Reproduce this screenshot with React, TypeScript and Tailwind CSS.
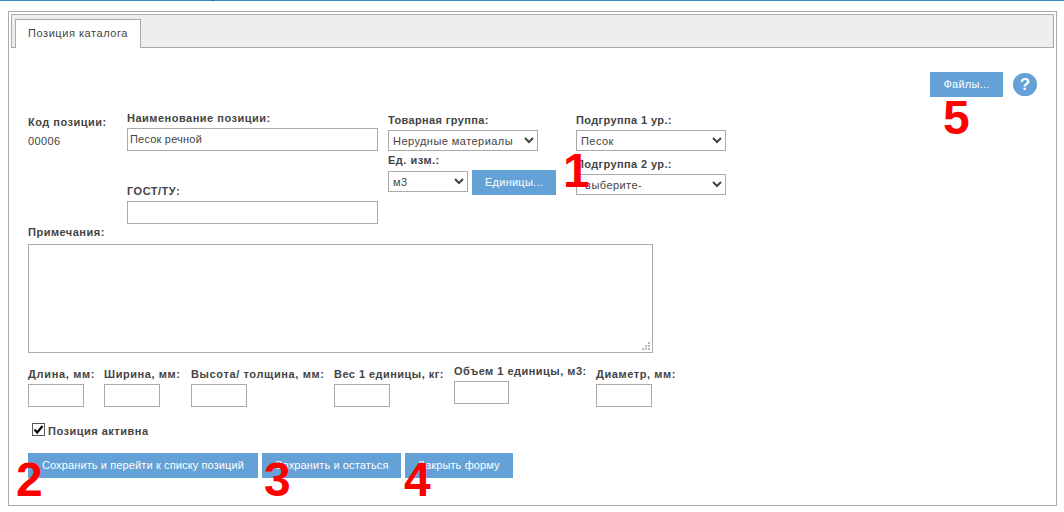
const label = "block text-[11px] font-bold leading-[14px] tracking-[0.5px] text-[#444] whitespace-nowrap";
const input = "block h-[23px] border border-[#aaa] bg-white px-[2px] pb-[2px] text-[11px] tracking-[0.2px] text-[#444] outline-none";
const select = "block h-[21px] border border-[#aaa] bg-white text-[11px] tracking-[0.45px] text-[#444] outline-none";
const button = "h-[25px] bg-[#63a1d6] text-[11px] tracking-[0.12px] text-white whitespace-nowrap";

const dims = [
  { text: "Длина, мм:", width: "w-[76px]", shift: "tracking-[0.68px]", box: "w-[56px]" },
  { text: "Ширина, мм:", width: "w-[87px]", shift: "tracking-[0.58px]", box: "w-[56px]" },
  { text: "Высота/ толщина, мм:", width: "w-[143px]", shift: "tracking-[0.62px]", box: "w-[56px]" },
  { text: "Вес 1 единицы, кг:", width: "w-[120px]", shift: "tracking-[0.46px]", box: "w-[56px]" },
  { text: "Объем 1 единицы, м3:", width: "w-[142px]", shift: "-mt-[3px] tracking-[0.48px]", box: "w-[55px]" },
  { text: "Диаметр, мм:", width: "w-[90px]", shift: "tracking-[0.58px]", box: "w-[56px]" },
];

function Mark({ n, className }: { n: string; className: string }) {
  return (
    <span className={`absolute text-[48px] leading-none font-bold text-[#f00] ${className}`}>{n}</span>
  );
}

export default function App() {
  return (
    <div className="relative h-[512px] w-[1064px] overflow-hidden bg-white font-['Liberation_Sans',Arial,sans-serif]">
      <div className="flex h-[1px] bg-[#2f8ccb]">
        <div className="ml-[212px] h-[1px] w-[2px] bg-[#1c5f8f]" />
      </div>
      <div className="mx-[8px] mt-[10px] h-[495px] w-[1049px] border border-[#aaa] bg-white p-[2px]">
        {/* tab strip */}
        <div className="flex h-[34px] items-end border border-[#aaa] bg-[#eee] pl-[3px]">
          <div className="-mb-px flex h-[29px] w-[126px] items-center justify-center border border-b-0 border-[#aaa] bg-white pb-[2px] text-[11px] tracking-[0.55px] text-[#444]">
            Позиция каталога
          </div>
        </div>

        <div className="px-[17px]">
          <div className="flex justify-end pt-[24px]">
            <button className={`${button} w-[73px] tracking-[0.25px]`}>Файлы...</button>
            <div className="mt-[1px] ml-[10px] flex h-[23px] w-[24px] items-center justify-center rounded-full bg-[#63a1d6] text-[17px] font-bold text-white">
              ?
            </div>
          </div>

          <div className="flex pt-[13px]">
            <div className="w-[99px] pt-[5px]">
              <div className={label}>Код позиции:</div>
              <div className="pt-[5px] text-[11px] leading-[14px] tracking-[0.4px] text-[#444]">00006</div>
            </div>
            <div className="w-[261px] pt-[1px]">
              <div className={label}>Наименование позиции:</div>
              <input className={`${input} mt-[3px] w-[251px]`} defaultValue="Песок речной" />
              <div className={`${label} mt-[33px]`}>ГОСТ/ТУ:</div>
              <input className={`${input} mt-[3px] w-[251px]`} />
            </div>
            <div className="w-[188px] pt-[3px]">
              <div className={`${label} tracking-[0.38px]`}>Товарная группа:</div>
              <select className={`${select} mt-[3px] w-[150px]`} defaultValue="a">
                <option value="a">Нерудные материалы</option>
              </select>
              <div className={`${label} mt-[2px]`}>Ед. изм.:</div>
              <div className="mt-[3px] flex items-start gap-[4px]">
                <select className={`${select} mt-[1px] w-[80px]`} defaultValue="a">
                  <option value="a">м3</option>
                </select>
                <button className={`${button} w-[84px] tracking-[0.25px]`}>Единицы...</button>
              </div>
            </div>
            <div className="w-[150px] pt-[3px]">
              <div className={`${label} tracking-[0.38px]`}>Подгруппа 1 ур.:</div>
              <select className={`${select} mt-[3px] w-[150px]`} defaultValue="a">
                <option value="a">Песок</option>
              </select>
              <div className={`${label} mt-[6px] tracking-[0.38px]`}>Подгруппа 2 ур.:</div>
              <select className={`${select} mt-[3px] w-[150px]`} defaultValue="a">
                <option value="a">-выберите-</option>
              </select>
            </div>
          </div>

          <div className={`${label} mt-[1px]`}>Примечания:</div>
          <div className="relative mt-[5px] h-[109px] w-[625px]">
            <textarea className="block h-full w-full resize-none border border-[#aaa] bg-white outline-none" />
            <svg className="absolute right-[3px] bottom-[3px]" width="8" height="8" viewBox="0 0 8 8" fill="#bbb">
              <rect x="6" y="0" width="2" height="2" />
              <rect x="3" y="3" width="2" height="2" />
              <rect x="6" y="3" width="2" height="2" />
              <rect x="0" y="6" width="2" height="2" />
              <rect x="3" y="6" width="2" height="2" />
              <rect x="6" y="6" width="2" height="2" />
            </svg>
          </div>

          <div className="mt-[14px] flex h-[40px]">
            {dims.map((d) => (
              <div key={d.text} className={d.width}>
                <div className={`${label} ${d.shift}`}>{d.text}</div>
                <input className={`${input} mt-[3px] ${d.box}`} />
              </div>
            ))}
          </div>

          <div className={`${label} mt-[16px] ml-[4px] flex items-center gap-[3px]`}>
            <span className="-mt-[3px] flex h-[13px] w-[13px] items-center justify-center border border-[#555] bg-white">
              <svg width="11" height="11" viewBox="0 0 11 11" fill="none" stroke="#000" strokeWidth="2.2">
                <path d="M1.5 5.5 L4.2 8.5 L9.5 2" />
              </svg>
            </span>
            <span className="mt-[1px]">Позиция активна</span>
          </div>

          <div className="mt-[15px] flex gap-[4px]">
            <button className={`${button} w-[230px]`}>Сохранить и перейти к списку позиций</button>
            <button className={`${button} w-[139px]`}>Сохранить и остаться</button>
            <button className={`${button} w-[108px]`}>Закрыть форму</button>
          </div>
        </div>
      </div>

      <Mark n="1" className="left-[563px] top-[147px]" />
      <Mark n="2" className="left-[16px] top-[456px]" />
      <Mark n="3" className="left-[264px] top-[456px]" />
      <Mark n="4" className="left-[404px] top-[456px]" />
      <Mark n="5" className="left-[943px] top-[94px]" />
    </div>
  );
}
